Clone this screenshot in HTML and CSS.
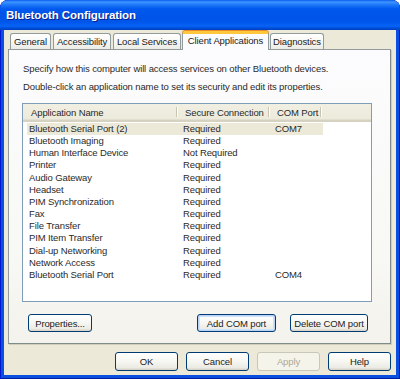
FILE: index.html
```html
<!DOCTYPE html>
<html>
<head>
<meta charset="utf-8">
<link rel="stylesheet" href="styles.css">
</head>
<body>
<div class="window">
  <div class="titlebar"><span class="title">Bluetooth Configuration</span></div>
  <div class="client">
    <div class="tabs">
      <div class="tab t-general">General</div>
      <div class="tab t-access">Accessibility</div>
      <div class="tab t-local">Local Services</div>
      <div class="tab t-client active">Client Applications</div>
      <div class="tab t-diag">Diagnostics</div>
    </div>
    <div class="panel">
      <p class="info first">Specify how this computer will access services on other Bluetooth devices.</p>
      <p class="info second">Double-click an application name to set its security and edit its properties.</p>
      <div class="list">
        <div class="header">
          <div class="hcell c1">Application Name</div>
          <div class="hcell c2">Secure Connection</div>
          <div class="hcell c3">COM Port</div>
          <div class="hcell c4"></div>
        </div>
        <div class="rows">
          <div class="row selected"><span class="c1">Bluetooth Serial Port (2)</span><span class="c2">Required</span><span class="c3">COM7</span></div>
          <div class="row"><span class="c1">Bluetooth Imaging</span><span class="c2">Required</span><span class="c3"></span></div>
          <div class="row"><span class="c1">Human Interface Device</span><span class="c2">Not Required</span><span class="c3"></span></div>
          <div class="row"><span class="c1">Printer</span><span class="c2">Required</span><span class="c3"></span></div>
          <div class="row"><span class="c1">Audio Gateway</span><span class="c2">Required</span><span class="c3"></span></div>
          <div class="row"><span class="c1">Headset</span><span class="c2">Required</span><span class="c3"></span></div>
          <div class="row"><span class="c1">PIM Synchronization</span><span class="c2">Required</span><span class="c3"></span></div>
          <div class="row"><span class="c1">Fax</span><span class="c2">Required</span><span class="c3"></span></div>
          <div class="row"><span class="c1">File Transfer</span><span class="c2">Required</span><span class="c3"></span></div>
          <div class="row"><span class="c1">PIM Item Transfer</span><span class="c2">Required</span><span class="c3"></span></div>
          <div class="row"><span class="c1">Dial-up Networking</span><span class="c2">Required</span><span class="c3"></span></div>
          <div class="row"><span class="c1">Network Access</span><span class="c2">Required</span><span class="c3"></span></div>
          <div class="row"><span class="c1">Bluetooth Serial Port</span><span class="c2">Required</span><span class="c3">COM4</span></div>
        </div>
      </div>
      <div class="panel-buttons">
        <button class="btn props">Properties...</button>
        <div class="spacer"></div>
        <button class="btn add hot">Add COM port</button>
        <button class="btn del">Delete COM port</button>
      </div>
    </div>
    <div class="dialog-buttons">
      <button class="btn dlg">OK</button>
      <button class="btn dlg">Cancel</button>
      <button class="btn dlg disabled">Apply</button>
      <button class="btn dlg">Help</button>
    </div>
  </div>
</div>
</body>
</html>
```

FILE: styles.css
```css
html, body {
  margin: 0;
  padding: 0;
  background: #ffffff;
}

.window {
  width: 400px;
  height: 379px;
  display: flex;
  flex-direction: column;
  background: #0a4fdf;
  border-radius: 8px 8px 0 0;
  overflow: hidden;
  box-sizing: border-box;
  box-shadow: inset 1px 0 0 #0019cf, inset -1px 0 0 #001ea0, inset 0 -1px 0 #001ea0;
  font-family: "Liberation Sans", Arial, sans-serif;
  font-size: 9.5px;
  letter-spacing: -0.12px;
  color: #222;
}

.titlebar {
  height: 30px;
  flex: none;
  display: flex;
  align-items: center;
  padding-left: 6px;
  background: linear-gradient(to bottom,
    #0a5cf0 0px, #3d95ff 2px, #1c77f8 5px, #0058ee 9px,
    #0054e8 16px, #0056ea 22px, #0763f5 26px, #0050dc 28px, #003dbd 30px);
  border-radius: 8px 8px 0 0;
}

.title {
  color: #ffffff;
  font-weight: bold;
  font-size: 11.5px;
  font-family: "Liberation Sans", Arial, sans-serif;
  letter-spacing: -0.1px;
  text-shadow: 1px 1px 0 #0a1e8a;
  position: relative;
  top: 0px;
}

.client {
  flex: 1;
  margin: 0 4px 4px 4px;
  background: #ece9d8;
  display: flex;
  flex-direction: column;
  padding: 1px 0 0 4px;
}

.tabs {
  display: flex;
  align-items: flex-end;
  height: 18px;
  padding-left: 2px;
  position: relative;
  z-index: 2;
}

.tab {
  height: 16px;
  box-sizing: border-box;
  border: 1px solid #919b9c;
  border-bottom: none;
  border-radius: 3px 3px 0 0;
  background: linear-gradient(to bottom, #ffffff 0%, #f7f7f4 50%, #ecebe6 100%);
  display: flex;
  align-items: center;
  justify-content: center;
  color: #222;
  margin-right: 2px;
  white-space: nowrap;
}

.t-general { width: 41px; }
.t-access { width: 58px; }
.t-local { width: 68px; margin-right: 1px; }
.t-client { width: 87px; margin-right: 1px; }
.t-diag { width: 54px; }

.tab.active {
  height: 19px;
  margin-bottom: -1px;
  background: #fcfcfe;
  border-top: 3px solid #ffc83c;
  border-radius: 3px 3px 0 0;
  padding-bottom: 3px;
  box-shadow: 0 -1px 0 #e68b2c;
}

.panel {
  width: 383px;
  height: 295px;
  box-sizing: border-box;
  border: 1px solid #919b9c;
  border-right-color: #7f8a8b;
  border-bottom-color: #7f8a8b;
  background: linear-gradient(to bottom, #fcfcfe 0%, #f8f8f5 70%, #f3f2ec 100%);
  box-shadow: 1px 1px 0 #d0cebf;
  padding: 13px 0 0 13px;
  display: flex;
  flex-direction: column;
}

.info {
  margin: 0;
  padding-left: 1px;
  line-height: 12px;
  color: #2a2a2a;
  white-space: nowrap;
}

.info.second {
  margin-top: 6px;
}

.list {
  margin-top: 10px;
  width: 350px;
  height: 199px;
  box-sizing: border-box;
  border: 1px solid #7f9db9;
  background: #ffffff;
  display: flex;
  flex-direction: column;
}

.header {
  display: flex;
  height: 18px;
  box-sizing: border-box;
  background: linear-gradient(to bottom, #f1efe2 0%, #ebeadb 100%);
  border-bottom: 2px solid #d6d2c2;
  box-shadow: inset 0 -1px 0 #e2dfd0;
}

.hcell {
  box-sizing: border-box;
  padding-left: 8px;
  display: flex;
  align-items: center;
  color: #2a2a2a;
  position: relative;
  white-space: nowrap;
}

.hcell.c1 { width: 154px; }
.hcell.c2 { width: 92px; }
.hcell.c3 { width: 52px; }
.hcell.c4 { flex: 1; }

.hcell.c1::after,
.hcell.c2::after,
.hcell.c3::after {
  content: "";
  position: absolute;
  right: 0;
  top: 3px;
  bottom: 3px;
  width: 1px;
  background: #c7c5b2;
  box-shadow: 1px 0 0 #ffffff;
}

.rows {
  padding: 1px 0 0 4px;
}

.row {
  display: flex;
  height: 12.17px;
  line-height: 12px;
  color: #2a2a2a;
  white-space: nowrap;
}

.row.selected {
  background: #ece9d8;
  width: 296px;
}

.row .c1 { width: 150px; padding-left: 2px; box-sizing: border-box; }
.row .c2 { width: 92px; padding-left: 6px; box-sizing: border-box; }
.row .c3 { width: 54px; padding-left: 6px; box-sizing: border-box; }

.panel-buttons {
  display: flex;
  align-items: center;
  margin-top: 12px;
  padding-left: 6px;
  width: 346px;
  box-sizing: border-box;
}

.spacer { flex: 1; }

.btn {
  font-family: "Liberation Sans", Arial, sans-serif;
  font-size: 9.5px;
  letter-spacing: -0.12px;
  color: #222;
  height: 18px;
  box-sizing: border-box;
  border: 1px solid #003c74;
  border-radius: 3px;
  background: linear-gradient(to bottom, #ffffff 0%, #f6f6f2 50%, #ecebe4 85%, #d6d0c5 100%);
  padding: 0;
  margin: 0;
  cursor: default;
}

.btn.props { width: 64px; }
.btn.add { width: 79px; margin-right: 14px; }
.btn.del { width: 78px; }

.btn.hot {
  box-shadow: inset 0 0 0 1px #bbd3f6, inset 0 0 0 2px #cee1fb;
}

.dialog-buttons {
  display: flex;
  justify-content: flex-end;
  gap: 8px;
  margin-top: 8px;
  padding-right: 5px;
}

.btn.dlg {
  width: 63px;
  height: 19px;
}

.btn.disabled {
  border-color: #c9c7ba;
  color: #aca899;
  background: #f5f4ea;
}
```
